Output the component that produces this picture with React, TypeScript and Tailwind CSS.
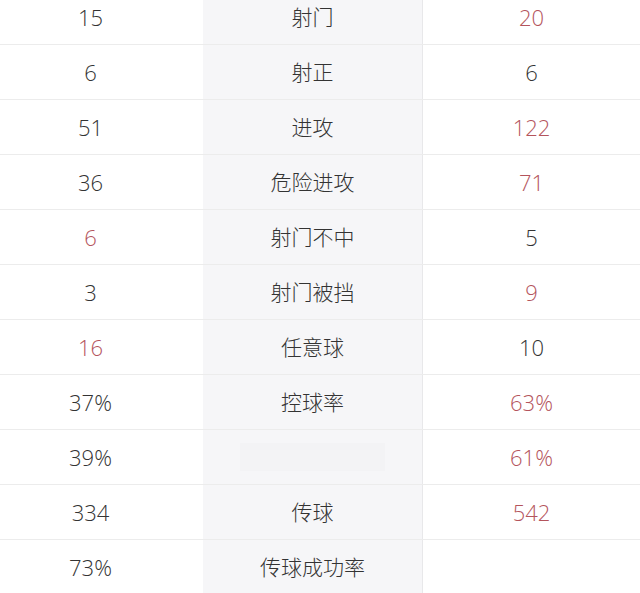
const rows: [string, string, string, 'l' | 'r' | ''][] = [
  ['15', '射门', '20', 'r'],
  ['6', '射正', '6', ''],
  ['51', '进攻', '122', 'r'],
  ['36', '危险进攻', '71', 'r'],
  ['6', '射门不中', '5', 'l'],
  ['3', '射门被挡', '9', 'r'],
  ['16', '任意球', '10', 'l'],
  ['37%', '控球率', '63%', 'r'],
  ['39%', '', '61%', 'r'],
  ['334', '传球', '542', 'r'],
  ['73%', '传球成功率', '', ''],
]

export default function App() {
  return (
    <div
      className="h-[593px] w-[640px] overflow-hidden bg-white text-[#333] text-[22px]"
      style={{ fontFamily: '"Open Sans", "Noto Sans CJK SC", sans-serif' }}
    >
      <div className="-mt-[10px]">
        {rows.map(([left, label, right, hi], i) => (
          <div key={i} className="grid h-[55px] grid-cols-[203px_219px_1px_217px] border-b border-[#ececec]">
            <div className={`flex items-center justify-center pr-[22px] font-light ${hi === 'l' ? 'text-[#b4545c]' : ''}`}>
              {left}
            </div>
            <div
              className="flex items-center justify-center bg-[#f6f6f8] text-[21px]"
              style={{ fontFamily: '"Noto Sans CJK SC", sans-serif' }}
            >
              {label === '' && i === 8 ? (
                <div className="h-[28px] w-[145px] bg-[#f3f3f5]" />
              ) : (
                <span className="font-light">{label}</span>
              )}
            </div>
            <div className="bg-[#e8e8ea]" />
            <div className={`flex items-center justify-center font-light ${hi === 'r' ? 'text-[#b4545c]' : ''}`}>
              {right}
            </div>
          </div>
        ))}
      </div>
    </div>
  )
}
